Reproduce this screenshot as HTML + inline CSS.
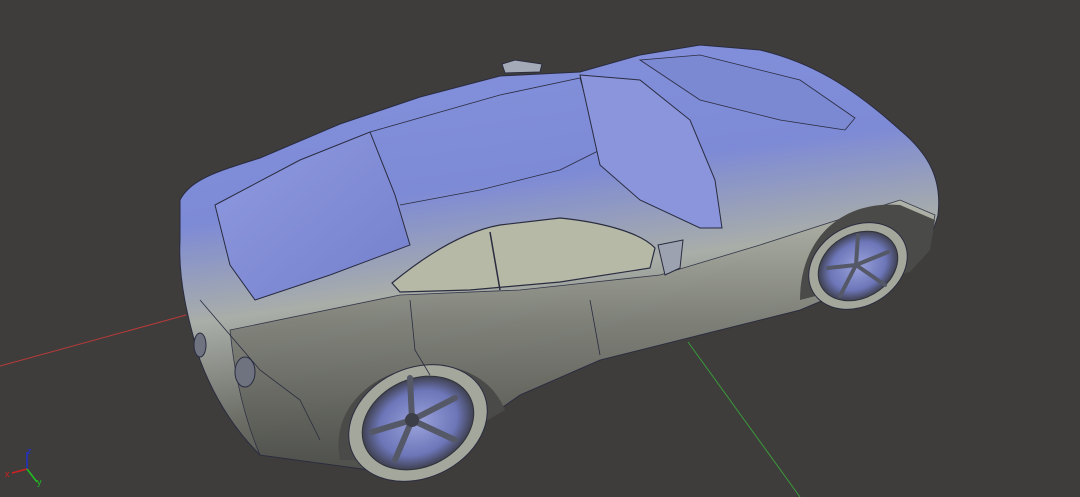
<!DOCTYPE html>
<html><head><meta charset="utf-8"><style>
html,body{margin:0;padding:0;background:#3e3d3b;width:1080px;height:497px;overflow:hidden}
svg{display:block}
</style></head><body>
<svg width="1080" height="497" viewBox="0 0 1080 497" xmlns="http://www.w3.org/2000/svg">
<defs>
<linearGradient id="body" x1="0" y1="0" x2="0.25" y2="1">
<stop offset="0" stop-color="#8592dc"/>
<stop offset="0.4" stop-color="#7d8ad6"/>
<stop offset="0.62" stop-color="#a9aea8"/>
<stop offset="0.85" stop-color="#6c6e66"/>
<stop offset="1" stop-color="#4e4f4a"/>
</linearGradient>
<linearGradient id="side" x1="0" y1="0" x2="0" y2="1">
<stop offset="0" stop-color="#b3b6aa"/>
<stop offset="0.45" stop-color="#7e8078"/>
<stop offset="1" stop-color="#4f504b"/>
</linearGradient>
<linearGradient id="glass" x1="0" y1="0" x2="1" y2="1">
<stop offset="0" stop-color="#8f9ae0"/>
<stop offset="1" stop-color="#7480cc"/>
</linearGradient>
<radialGradient id="rim" cx="0.5" cy="0.5" r="0.5">
<stop offset="0" stop-color="#9aa3dc"/>
<stop offset="0.7" stop-color="#6d76b8"/>
<stop offset="1" stop-color="#3f4150"/>
</radialGradient>
</defs>
<line x1="0" y1="366" x2="186" y2="315" stroke="#b83a3a" stroke-width="1"/>
<line x1="688" y1="342" x2="800" y2="497" stroke="#3a9a3a" stroke-width="1"/>
<path d="M180,200 C190,180 215,172 260,158 L340,124 L420,97 L500,76 L580,72 L640,55 L700,45 L760,50 C810,62 850,85 900,130 C930,155 942,180 938,215 C930,245 915,262 890,272 L860,285 L800,310 L700,335 L600,360 L520,395 L470,430 L430,460 L370,470 L260,455 C235,430 215,400 200,360 C188,320 178,280 180,240 Z" fill="url(#body)" stroke="#2a2c40" stroke-width="1"/>
<path d="M230,330 L400,295 L520,290 L660,275 L760,245 L900,200 L935,215 C930,245 915,262 890,272 L800,310 L700,335 L600,360 L520,395 L470,430 L430,460 L370,470 L260,455 C245,420 235,380 230,330 Z" fill="url(#side)" opacity="0.9" stroke="#2a2c40" stroke-width="0.8"/>
<path d="M215,205 L300,160 L370,132 L395,195 L410,245 L330,275 L255,300 L230,265 Z" fill="url(#glass)" stroke="#2a2c40" stroke-width="1"/>
<path d="M370,132 L500,95 L580,78 L600,150 L560,170 L480,190 L400,205" fill="none" stroke="#2a2c40" stroke-width="0.8"/>
<path d="M580,75 L640,80 L690,120 L715,180 L722,228 L700,228 L640,200 L600,165 Z" fill="#8a95dc" stroke="#2a2c40" stroke-width="1"/>
<path d="M392,283 C420,260 460,232 500,225 L560,218 C600,222 640,232 655,248 L650,268 L560,282 L470,290 L400,292 Z" fill="#b6b9a6" stroke="#2a2c40" stroke-width="1.2"/>
<line x1="490" y1="232" x2="500" y2="290" stroke="#2a2c40" stroke-width="1.5"/>
<path d="M658,245 L683,240 L680,268 L665,275 Z" fill="#9da2b0" stroke="#2a2c40"/>
<path d="M502,64 L515,60 L542,64 L540,72 L505,73 Z" fill="#a4aab8" stroke="#2a2c40"/>
<path d="M640,60 L700,55 L800,80 L855,118 L845,130 L780,120 L700,100 Z" fill="#7b88d2" stroke="#2a2c40" stroke-width="0.8"/>
<path d="M800,300 C800,240 840,200 900,205 L935,220 L930,250 L910,272 Z" fill="#4a4b48"/>
<path d="M340,460 C330,410 370,370 430,365 C470,365 495,385 505,410 L470,430 L430,462 Z" fill="#4a4b48"/>
<ellipse cx="418" cy="423" rx="72" ry="55" transform="rotate(-25 418 423)" fill="#a3a79c" stroke="#2a2c40"/>
<ellipse cx="418" cy="423" rx="58" ry="44" transform="rotate(-25 418 423)" fill="url(#rim)" stroke="#30323a"/>
<g stroke="#555866" stroke-width="6" stroke-linecap="round">
<line x1="412" y1="420" x2="410" y2="378"/><line x1="412" y1="420" x2="455" y2="398"/><line x1="412" y1="420" x2="455" y2="440"/><line x1="412" y1="420" x2="395" y2="460"/><line x1="412" y1="420" x2="372" y2="432"/>
</g>
<circle cx="412" cy="420" r="7" fill="#3d3f48"/>
<ellipse cx="858" cy="266" rx="52" ry="40" transform="rotate(-30 858 266)" fill="#a3a79c" stroke="#2a2c40"/>
<ellipse cx="858" cy="266" rx="42" ry="32" transform="rotate(-30 858 266)" fill="url(#rim)" stroke="#30323a"/>
<g stroke="#555866" stroke-width="4" stroke-linecap="round">
<line x1="856" y1="265" x2="858" y2="235"/><line x1="856" y1="265" x2="888" y2="252"/><line x1="856" y1="265" x2="885" y2="285"/><line x1="856" y1="265" x2="840" y2="296"/><line x1="856" y1="265" x2="828" y2="268"/>
</g>
<ellipse cx="245" cy="372" rx="10" ry="15" fill="#6f7380" stroke="#2a2c40"/>
<ellipse cx="200" cy="345" rx="6" ry="12" fill="#6f7380" stroke="#2a2c40"/>
<path d="M410,300 L415,350 L430,375 M590,300 L600,355 M200,300 L260,370 L300,400 L320,440" fill="none" stroke="#2a2c40" stroke-width="0.8"/>
<line x1="27" y1="469" x2="27" y2="452" stroke="#2030d0" stroke-width="1.5"/>
<line x1="27" y1="469" x2="12" y2="473" stroke="#d02020" stroke-width="1.5"/>
<line x1="27" y1="469" x2="37" y2="482" stroke="#20c020" stroke-width="1.5"/>
<text x="27" y="454" font-family="Liberation Sans,sans-serif" font-size="9" fill="#2030d0">z</text>
<text x="5" y="477" font-family="Liberation Sans,sans-serif" font-size="9" fill="#d02020">x</text>
<text x="37" y="485" font-family="Liberation Sans,sans-serif" font-size="9" fill="#20c020">y</text>
</svg>
</body></html>
